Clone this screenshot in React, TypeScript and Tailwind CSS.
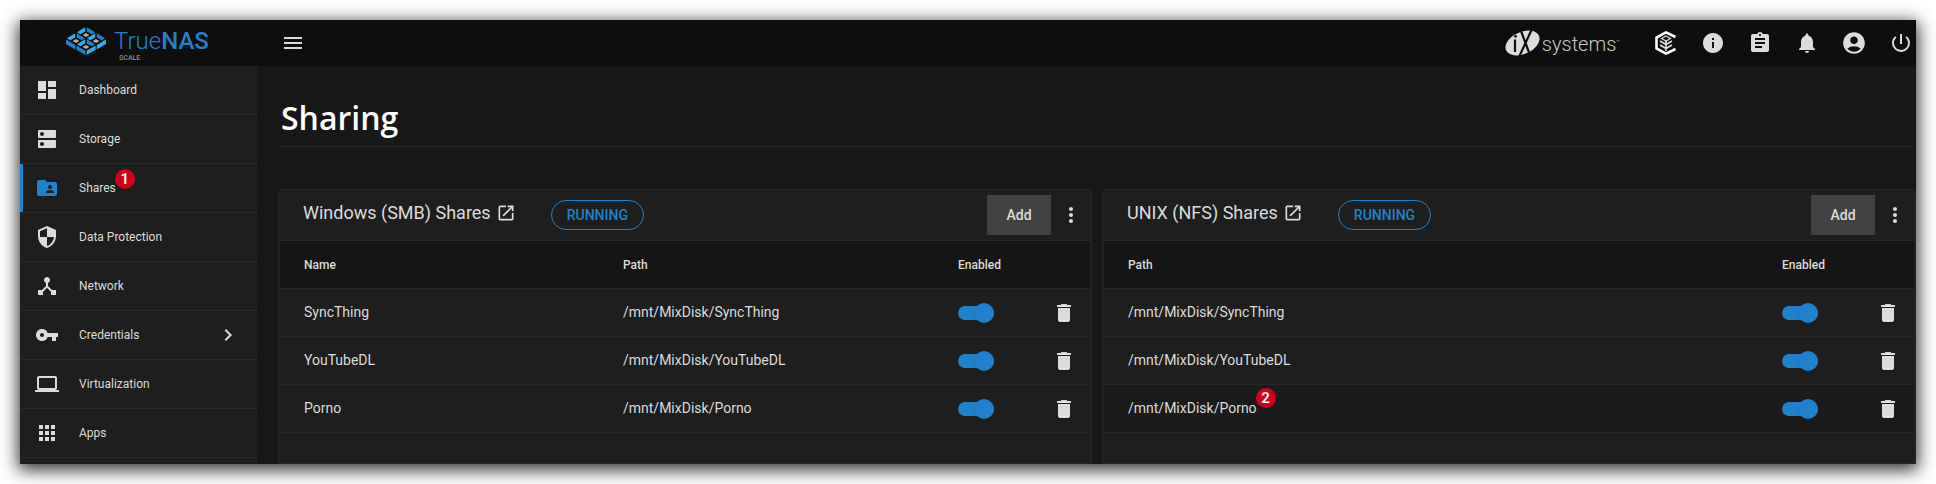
import React from "react";
import {
  MdDashboard, MdDns, MdFolderShared, MdSecurity, MdDeviceHub, MdVpnKey, MdComputer, MdApps,
  MdMenu, MdInfo, MdAssignment, MdNotifications, MdAccountCircle, MdPowerSettingsNew,
  MdMoreVert, MdDelete, MdChevronRight, MdOpenInNew,
} from "react-icons/md";
import type { IconType } from "react-icons";

type NavItem = { label: string; icon: IconType; active?: boolean; expandable?: boolean; step?: string };

const navItems: NavItem[] = [
  { label: "Dashboard", icon: MdDashboard },
  { label: "Storage", icon: MdDns },
  { label: "Shares", icon: MdFolderShared, active: true, step: "1" },
  { label: "Data Protection", icon: MdSecurity },
  { label: "Network", icon: MdDeviceHub },
  { label: "Credentials", icon: MdVpnKey, expandable: true },
  { label: "Virtualization", icon: MdComputer },
  { label: "Apps", icon: MdApps },
];

type Share = { name: string; path: string; step?: string; hovered?: boolean };

const smbShares: Share[] = [
  { name: "SyncThing", path: "/mnt/MixDisk/SyncThing" },
  { name: "YouTubeDL", path: "/mnt/MixDisk/YouTubeDL" },
  { name: "Porno", path: "/mnt/MixDisk/Porno" },
];

const nfsShares: Share[] = [
  { name: "SyncThing", path: "/mnt/MixDisk/SyncThing" },
  { name: "YouTubeDL", path: "/mnt/MixDisk/YouTubeDL" },
  { name: "Porno", path: "/mnt/MixDisk/Porno", step: "2", hovered: true },
];

function StepBadge({ step }: { step: string }) {
  return (
    <span className="absolute bottom-2 left-full -ml-px flex size-5 items-center justify-center rounded-full bg-[#d0021b] text-[15px] leading-5 font-semibold text-white">
      {step}
    </span>
  );
}

// Isometric tile positions, as centre points of each diamond.
const tiles: [number, number][] = [
  [20, 8], [10, 14], [30, 14], [20, 20],
];

function TrueNasMark() {
  return (
    <svg viewBox="0 0 40 28" className="h-7 w-10" aria-hidden="true">
      {tiles.map(([x, y]) => (
        <g key={`${x}-${y}`}>
          <path d={`M${x - 0.8} ${y - 7.8}v4.300l-4.800 2.800-3.500-2.100z`} fill="#2fb0ea" />
          <path d={`M${x + 0.8} ${y - 7.8}v4.300l4.800 2.800 3.500-2.100z`} fill="#1e82cd" />
          <path d={`M${x} ${y - 2}l3.400 2-3.400 2-3.400-2z`} fill="#b0b0b0" />
        </g>
      ))}
      <path d="M0 12.500l9.300 5.400v4.600L0 17zM10.400 18.600l9 5.200v4.200l-9-5.200z" fill="#1e82cd" />
      <path d="M40 12.500l-9.300 5.400v4.600L40 17zM29.600 18.600l-9 5.200v4.200l9-5.200z" fill="#2fb0ea" />
    </svg>
  );
}

function IxLogo() {
  return (
    <a href="#ixsystems" aria-label="iXsystems" className="flex items-center gap-0.5">
      <svg viewBox="0 0 35 26" className="h-[26px] w-[35px]" aria-hidden="true">
        <ellipse cx="17.500" cy="13" rx="18" ry="11" transform="rotate(-24 17.500 13)" fill="#dcdcdc" />
        <path d="M10 9.500v12.500M16 1l9 24M26.500 0l-12 26" stroke="#0e0e0e" strokeWidth="2.200" fill="none" />
        <circle cx="10.500" cy="6.300" r="1.400" fill="#0e0e0e" />
      </svg>
      <span className="flex items-center font-light text-[#c8c8c8]">
        <span className="pt-0.5 text-[20px] leading-6">systems</span>
        <span className="pb-1 text-[6px]">™</span>
      </span>
    </a>
  );
}

function TrueCommandIcon() {
  return (
    <svg viewBox="0 0 22 24" className="h-6 w-[22px]" fill="none" aria-hidden="true">
      <path d="M20.500 6L11 1.400 1.500 6.500v11l9.500 5.100 9.500-4.600" stroke="#fff" strokeWidth="2.600" />
      <path d="M11 5l4.500 2.500L11 10 6.500 7.500z" stroke="#dcdcdc" strokeWidth="1.200" />
      <path d="M11 10v10M5 10l6 3.500 6-3.500M5 14l6 3.500 6-3.500" stroke="#dcdcdc" strokeWidth="1.700" />
    </svg>
  );
}

function IconButton({ label, children }: { label: string; children: React.ReactNode }) {
  return (
    <button type="button" aria-label={label} className="flex size-6 items-center justify-center">
      {children}
    </button>
  );
}

function TopBar() {
  return (
    <header className="flex h-[46px] shrink-0 items-center bg-[#0e0e0e]">
      <div className="flex h-full w-[237px] shrink-0 justify-center pt-[7px] pr-0.5">
        <a href="#home" className="flex gap-2">
          <TrueNasMark />
          <span className="flex flex-col text-[#1e82cd]">
            <span className="text-[24px] leading-7 font-light">
              True<b className="font-medium">NAS</b>
            </span>
            <span className="pl-[5px] text-[7px] leading-[7px] font-medium text-[#8c8c8c]">SCALE</span>
          </span>
        </a>
      </div>
      <div className="flex flex-1 items-center justify-between pr-[3px] pl-6">
        <IconButton label="Toggle menu"><MdMenu size={24} /></IconButton>
        <div className="flex items-center">
          <IxLogo />
          <div className="ml-[34px] flex items-center gap-[23px]">
            <IconButton label="TrueCommand"><TrueCommandIcon /></IconButton>
            <IconButton label="System information"><MdInfo size={24} /></IconButton>
            <IconButton label="Jobs"><MdAssignment size={24} /></IconButton>
            <IconButton label="Alerts"><MdNotifications size={24} /></IconButton>
            <IconButton label="Account"><MdAccountCircle size={26} className="shrink-0" /></IconButton>
            <IconButton label="Power"><MdPowerSettingsNew size={24} /></IconButton>
          </div>
        </div>
      </div>
    </header>
  );
}

function Sidebar() {
  return (
    <nav className="w-[237px] shrink-0 bg-[#1e1e1e]">
      <ul>
        {navItems.map(({ label, icon: Icon, active, expandable, step }) => (
          <li key={label} className="border-b border-[#292929]">
            <a
              href={`#${label}`}
              className={`flex h-12 items-center border-l-3 pr-[17px] pl-3 text-[12px] ${active ? "border-[#1e82cd]" : "border-transparent"}`}
            >
              <Icon size={24} className={active ? "text-[#1e82cd]" : ""} />
              <span className="relative ml-5">
                {label}
                {step && <StepBadge step={step} />}
              </span>
              {expandable && <MdChevronRight size={24} className="ml-auto" />}
            </a>
          </li>
        ))}
      </ul>
    </nav>
  );
}

function Toggle({ label }: { label: string }) {
  return (
    <label className="relative flex h-5 w-9 items-center">
      <input type="checkbox" defaultChecked aria-label={label} className="peer sr-only" />
      <span className="h-[14px] w-9 rounded-full bg-[#1e82cd]" />
      <span className="absolute right-0 size-5 rounded-full bg-[#1e82cd] shadow-[0_1px_2px_rgba(0,0,0,0.2)]" />
    </label>
  );
}

function ShareCard({ title, shares, showName }: { title: string; shares: Share[]; showName?: boolean }) {
  return (
    <section className="flex flex-1 flex-col rounded-t-[5px] border border-[#282828] bg-[#1e1e1e] px-px">
      <div className="flex h-[50px] items-center justify-between pr-[7px] pl-[23px]">
        <div className="flex items-center">
          <h2 className="flex items-center gap-[5px] pb-1 text-[18px] leading-6">
            <a href={`#${title}`}>{title}</a>
            <MdOpenInNew size={20} />
          </h2>
          <button type="button" className="ml-[35px] h-[30px] rounded-full border border-[#1e82cd] px-[15px] text-[14px] font-medium text-[#1e82cd]">
            RUNNING
          </button>
        </div>
        <div className="flex items-center gap-2">
          <button type="button" className="h-10 w-16 bg-[#424242] text-[14px] font-medium">Add</button>
          <IconButton label={`${title} options`}><MdMoreVert size={24} /></IconButton>
        </div>
      </div>
      <table className="w-full table-fixed text-left text-[14px]">
        <thead>
          <tr className="h-12 border-y border-[#282828] bg-[#151515] text-[12px]">
            {showName && <th className="w-[343px] pl-6 font-medium">Name</th>}
            <th className={`font-medium ${showName ? "" : "pl-6"}`}>Path</th>
            <th className="w-[94px] font-medium">Enabled</th>
            <th className="w-[38px]" aria-label="Actions" />
          </tr>
        </thead>
        <tbody>
          {shares.map((s) => (
            <tr key={s.path} className={`h-12 border-b border-[#282828] ${s.hovered ? "bg-[#1b1b1b]" : ""}`}>
              {showName && <td className="pl-6">{s.name}</td>}
              <td className={showName ? "" : "pl-6"}>
                <span className="relative">
                  {s.path}
                  {s.step && <StepBadge step={s.step} />}
                </span>
              </td>
              <td><Toggle label={`Enable ${s.name}`} /></td>
              <td><IconButton label={`Delete ${s.name}`}><MdDelete size={24} /></IconButton></td>
            </tr>
          ))}
        </tbody>
      </table>
    </section>
  );
}

export default function App() {
  return (
    <div className="h-screen bg-white p-5 font-['Roboto',sans-serif] text-[#dcdcdc]">
      <div className="flex h-full flex-col overflow-hidden bg-[#171717] shadow-[0_4px_16px_2px_rgba(0,0,0,0.8)]">
        <TopBar />
        <div className="flex min-h-0 flex-1">
          <Sidebar />
          <main className="flex min-w-0 flex-1 flex-col bg-[#171717] pl-[21px]">
            <h1 className="mx-[3px] flex h-[81px] items-end border-b border-[#292929] pb-1 font-['Open_Sans',sans-serif] text-[32px] font-semibold text-white">
              Sharing
            </h1>
            <div className="mt-[42px] flex flex-1 gap-[10px]">
              <ShareCard title="Windows (SMB) Shares" shares={smbShares} showName />
              <ShareCard title="UNIX (NFS) Shares" shares={nfsShares} />
            </div>
          </main>
        </div>
      </div>
    </div>
  );
}
